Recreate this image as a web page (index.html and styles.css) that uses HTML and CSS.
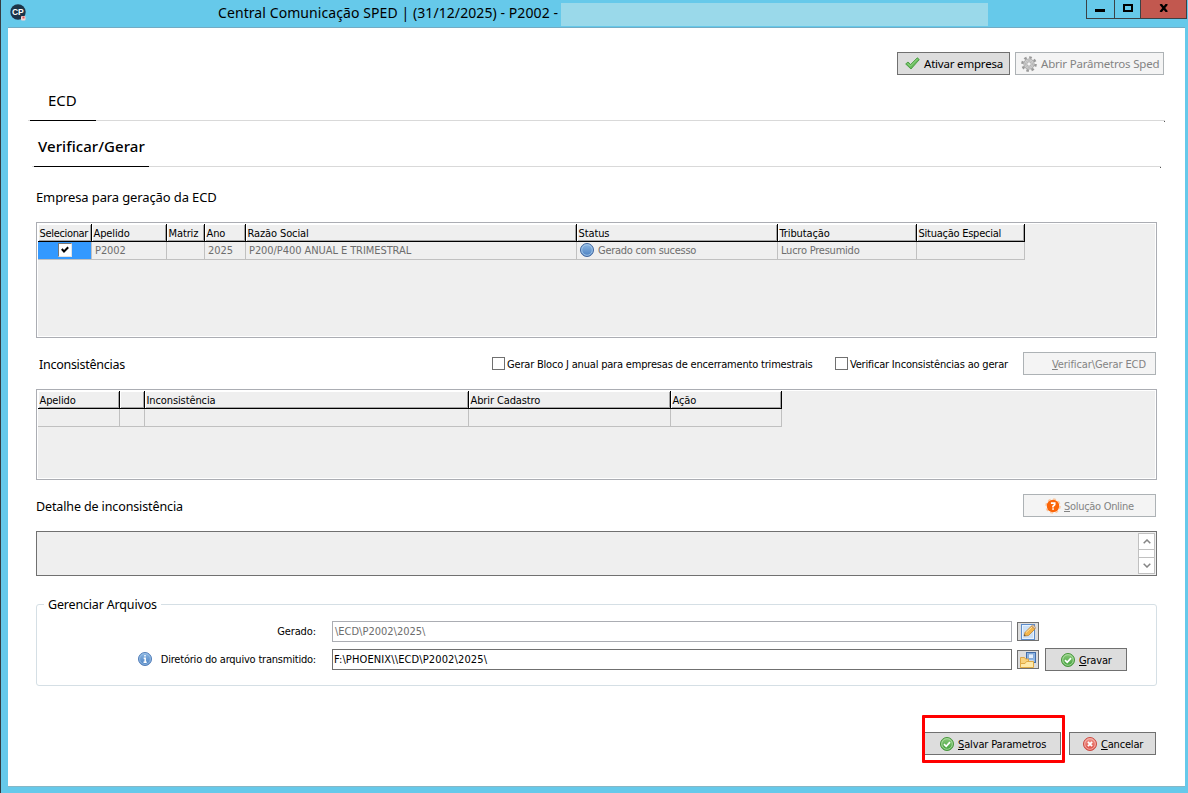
FILE: index.html
```html
<!DOCTYPE html>
<html lang="pt-BR">
<head>
<meta charset="utf-8">
<title>Central Comunicação SPED</title>
<link rel="stylesheet" href="styles.css">
</head>
<body>
<svg class="defs" width="0" height="0" aria-hidden="true">
  <defs>
    <linearGradient id="blue" x1="0" y1="0" x2="0" y2="1"><stop offset="0" stop-color="#8db8e4"/><stop offset="1" stop-color="#4a7fc0"/></linearGradient>
    <linearGradient id="green" x1="0" y1="0" x2="0" y2="1"><stop offset="0" stop-color="#8ccb7c"/><stop offset="1" stop-color="#3f9f3a"/></linearGradient>
    <linearGradient id="red" x1="0" y1="0" x2="0" y2="1"><stop offset="0" stop-color="#f09a90"/><stop offset="1" stop-color="#dc4a42"/></linearGradient>
    <symbol id="ok" viewBox="0 0 14 14">
      <circle cx="7" cy="7" r="6.5" fill="url(#green)" stroke="#47963c"/>
      <circle cx="7" cy="7" r="5.3" fill="none" stroke="#b9e2ad" stroke-width=".8"/>
      <path d="M4 7.2 6.2 9.3 10 5.2" fill="none" stroke="#fff" stroke-width="1.7"/>
    </symbol>
  </defs>
</svg>
<div class="window">
  <header class="titlebar">
    <svg class="app-icon" width="17" height="17" viewBox="0 0 17 17">
      <circle cx="8" cy="8" r="7.7" fill="#1d3448"/>
      <text x="7.800" y="11" text-anchor="middle" class="app-mark">CP</text>
      <rect x="11" y="12" width="4.500" height="4.500" rx="1" fill="#f3d5d6"/><rect x="12.500" y="12.500" width="2" height="2" fill="#e05555"/>
    </svg>
    <span class="title">Central Comunicação SPED | (31/12/2025) - P2002 -</span>
    <span class="mask"></span>
    <div class="controls">
      <span class="ctl min"><svg width="10" height="3"><rect width="10" height="3"/></svg></span>
      <span class="ctl max"><svg width="10" height="8"><rect x="1" y="1" width="8" height="6" fill="none" stroke="#000" stroke-width="2"/></svg></span>
      <span class="ctl close"><svg width="10" height="8"><path d="M1.500 0 8 8M8 0 1.500 8" stroke="#000" stroke-width="2.300"/></svg></span>
    </div>
  </header>
  <main class="client">
    <div class="toolbar">
      <button class="btn activate"><svg width="15" height="13" viewBox="0 0 15 13"><path d="M.7 7 3 5l2.600 2.500L12.300.8 14.300 2.600 6 12Z" fill="#68bb5c" stroke="#469a40" stroke-width=".9"/><path d="M2.500 6.500 5.500 9 12.500 2" fill="none" stroke="#9ada8d" stroke-width=".9"/></svg><span>Ativar empresa</span></button>
      <button class="btn off params"><svg width="16" height="16" viewBox="0 0 16 16"><circle cx="8" cy="8" r="6.600" fill="none" stroke="#999" stroke-width="2.400" stroke-dasharray="2.600 2.584"/><circle cx="8" cy="8" r="4.300" fill="#e2e2e2" stroke="#a6a6a6" stroke-width="2.600"/><circle cx="8" cy="8" r="4.200" fill="none" stroke="#cfcfcf" stroke-width="1.200"/><circle cx="8" cy="8" r="2.200" fill="#f4f4f4" stroke="#999" stroke-width=".8"/></svg><span>Abrir Parâmetros Sped</span></button>
    </div>
    <nav class="tabs outer"><span class="tab">ECD</span></nav>
    <nav class="tabs inner"><span class="tab">Verificar/Gerar</span></nav>

    <section class="body">
      <h2 class="heading first">Empresa para geração da ECD</h2>
      <div class="grid companies">
        <div class="row head"><span class="narrow">Selecionar</span><span>Apelido</span><span>Matriz</span><span>Ano</span><span>Razão Social</span><span>Status</span><span>Tributação</span><span class="special">Situação Especial</span></div>
        <div class="row data">
          <span class="picked"><i class="tick"><svg width="8" height="8" viewBox="0 0 8 8"><path d="M.8 3 3 5.500 7.200 1.200" fill="none" stroke="#000" stroke-width="2"/></svg></i></span>
          <span>P2002</span><span></span><span>2025</span><span>P200/P400 ANUAL E TRIMESTRAL</span>
          <span class="state"><svg width="14" height="14" viewBox="0 0 14 14"><circle cx="7" cy="7" r="6.500" fill="url(#blue)" stroke="#41669e"/><circle cx="7" cy="7" r="5.300" fill="none" stroke="#a5c7e8" stroke-width=".9"/></svg><b>Gerado com sucesso</b></span>
          <span class="tax">Lucro Presumido</span><span></span>
        </div>
      </div>

      <div class="line checks">
        <h2 class="heading">Inconsistências</h2>
        <label class="check block-j"><i class="box"></i><span class="text">Gerar Bloco J anual para empresas de encerramento trimestrais</span></label>
        <label class="check verify"><i class="box"></i><span class="text">Verificar Inconsistências ao gerar</span></label>
        <button class="btn off wide run"><span class="text"><u>V</u>erificar\Gerar ECD</span></button>
      </div>
      <div class="grid issues">
        <div class="row head"><span>Apelido</span><span></span><span>Inconsistência</span><span>Abrir Cadastro</span><span>Ação</span></div>
        <div class="row data"><span></span><span></span><span></span><span></span><span></span></div>
      </div>

      <div class="line detail">
        <h2 class="heading">Detalhe de inconsistência</h2>
        <button class="btn off wide help"><svg width="16" height="16" viewBox="0 0 16 16"><circle cx="8" cy="8" r="7" fill="none" stroke="#fcc79e" stroke-width="1.500" stroke-dasharray="2.800 2.700"/><circle cx="8" cy="8" r="6.200" fill="#fb6508"/><path d="M5.900 5.200h3.800v1.400L8 8.300v1.200" fill="none" stroke="#fff" stroke-width="1.700"/><rect x="7.200" y="10.300" width="1.700" height="1.500" fill="#fff"/></svg><span class="text"><u>S</u>olução Online</span></button>
      </div>
      <div class="memo">
        <div class="scroll"><i><svg width="8" height="5"><path d="M.7 4.300 4 1 7.300 4.300" fill="none" stroke="#858585" stroke-width="1.500"/></svg></i><i><svg width="8" height="5"><path d="M.7.700 4 4 7.300.700" fill="none" stroke="#858585" stroke-width="1.500"/></svg></i></div>
      </div>

      <div class="group">
        <span class="legend">Gerenciar Arquivos</span>
        <div class="field">
          <label class="label"><span>Gerado:</span></label>
          <div class="input dim">\ECD\P2002\2025\</div>
          <button class="mini"><svg width="16" height="16" viewBox="0 0 16 16"><rect x="1.500" y=".5" width="13" height="15" fill="#e8f2fc" stroke="#5b8ccb"/><rect x="3" y="2" width="10" height="12" fill="#cbdff5"/><path d="M4 12 5 8.500 11.500 2 15 5 8.500 11.500Z" fill="#f3b54a" stroke="#b98335" stroke-width=".8"/><path d="M6 8.500 12 3" stroke="#ffe3a3"/><path d="M11.500 2 13 .7 15.700 3.500 15 5Z" fill="#e9c8a4" stroke="#a7835c" stroke-width=".6"/><path d="M4 12l.5-1.700L5.700 11.500Z" fill="#444"/></svg></button>
        </div>
        <div class="field second">
          <label class="label"><svg class="info" width="14" height="14" viewBox="0 0 14 14"><circle cx="7" cy="7" r="6.500" fill="url(#blue)" stroke="#527db8"/><circle cx="7" cy="7" r="5.400" fill="none" stroke="#a5c7e8" stroke-width=".7"/><path d="M7 3v1.600M5.700 6.200H7.200V10M5.500 10.300h3.200" stroke="#fff" stroke-width="1.500" fill="none"/></svg><span class="text">Diretório do arquivo transmitido:</span></label>
          <div class="input path">F:\PHOENIX\\ECD\P2002\2025\</div>
          <button class="mini"><svg width="16" height="16" viewBox="0 0 16 16"><rect x="6.500" y=".5" width="9" height="10" fill="#8db6e6" stroke="#426da9"/><rect x="8.500" y="2" width="5" height="4.500" fill="#e4effb" stroke="#6a92c6" stroke-width=".6"/><rect x="8.500" y="8" width="5" height="2" fill="#d3d9e1"/><path d="M.5 15.500v-10h4l1 1.500h3v2.500" fill="#f9d27c" stroke="#dda545"/><path d="M.5 15.500v-4h4.500l1.500-2h7v6Z" fill="#ffe9a8" stroke="#dfaa45"/></svg></button>
          <button class="btn save-file"><svg width="14" height="14"><use href="#ok"/></svg><span class="text"><u>G</u>ravar</span></button>
        </div>
      </div>
    </section>
    <footer class="actions">
      <div class="highlight"><button class="btn save"><svg width="14" height="14"><use href="#ok"/></svg><span class="text"><u>S</u>alvar Parametros</span></button></div>
      <button class="btn cancel"><svg width="14" height="14" viewBox="0 0 14 14"><circle cx="7" cy="7" r="6.500" fill="url(#red)" stroke="#cb4a42"/><circle cx="7" cy="7" r="5.300" fill="none" stroke="#f8c1bb" stroke-width=".8"/><path d="m4.900 4.900 4.200 4.200M9.100 4.900 4.900 9.100" stroke="#fff" stroke-width="1.800"/></svg><span class="text"><u>C</u>ancelar</span></button>
    </footer>
  </main>
</div>
</body>
</html>
```
FILE: styles.css
```css
* { box-sizing: border-box; }
body { margin: 0; font: 11px/14px "DejaVu Sans Condensed", "DejaVu Sans", sans-serif; color: #000; }
b { font-weight: normal; }
i { font-style: normal; }
svg { display: block; flex: none; }
u { text-decoration: underline; text-underline-offset: 1px; text-decoration-thickness: 1px; }
.defs { position: absolute; }
.window { width: 1188px; height: 793px; overflow: hidden; background: #66c9ea; border-left: 1px solid #343b40; padding: 0 3px 6px 7px; }
.titlebar { height: 28px; display: flex; align-items: flex-start; border-bottom: 1px solid #72abc4; }
.app-icon { margin: 4px 0 0 2px; }
.app-mark { font: bold 8.5px "Liberation Sans", sans-serif; fill: #fff; }
.title { margin-left: 191px; width: 343px; font: 14px/26px "Noto Sans", sans-serif; letter-spacing: .08px; white-space: nowrap; }
.mask { width: 427px; height: 23px; margin-top: 3px; background: #9ad9ea; }
.controls { display: flex; margin-left: 98px; margin-right: -2px; width: 101px; height: 19px; border: 1px solid #3b4145; border-top: 0; }
.ctl { display: flex; justify-content: center; border-right: 1px solid #3b4145; }
.min { width: 28px; padding: 9px 1px 0 0; }
.max { width: 26px; padding-top: 4px; }
.close { width: 45px; padding-top: 4px; background: #c2584f; border: 0; }
.client { height: 759px; background: #fff; padding-top: 24px; border-bottom: 1px solid #86b7c6; }
.toolbar { display: flex; justify-content: flex-end; gap: 5px; padding-right: 21px; }
.btn { display: flex; align-items: center; height: 23px; padding: 0; border: 1px solid #707070; background: #ddd; font: inherit; color: #000; white-space: nowrap; }
.off { background: #f4f4f4; border-color: #adb2b5; color: #838383; }
.text { letter-spacing: -.19px; padding-top: 2px; }
.activate, .params { gap: 4px; font: 11.5px/16px "Noto Sans", sans-serif; letter-spacing: -.2px; }
.activate { width: 113px; padding-left: 7px; }
.params { width: 149px; padding-left: 5px; }
.tabs { position: relative; display: flex; height: 46px; border-bottom: 1px solid #d9d9d9; }
.tabs::after { content: ""; position: absolute; right: 0; bottom: -2px; width: 1px; height: 1px; background: #555; }
.outer { margin: 0 20px; padding-left: 2px; }
.inner { margin: 0 24px; padding-left: 2px; }
.tab { display: flex; align-items: center; height: 46px; border-bottom: 1px solid #000; white-space: nowrap; font: 15px/20px "Noto Sans", sans-serif; padding-top: 4px; }
.outer .tab { width: 66px; padding-left: 18px; }
.inner .tab { width: 115px; padding-left: 4px; font-weight: 500; letter-spacing: .07px; }
.body { margin: 0 28px; }
.heading { margin: 0; font: 12.5px/18px "Noto Sans", sans-serif; letter-spacing: -.12px; white-space: nowrap; }
.line .heading { padding-top: 2px; }
.first { padding: 21px 0 16px; font-size: 13px; }
.grid { border: 1px solid #abadb3; background: #efefef; box-shadow: inset 0 0 0 1px #fff; padding: 1px; }
.companies { height: 116px; }
.issues { height: 91px; }
.row { display: grid; white-space: nowrap; width: max-content; letter-spacing: -.11px; }
.companies .row { grid-template-columns: 54px 75px 38px 41px 331px 201px 139px 108px; }
.issues .row { grid-template-columns: 82px 25px 324px 202px 111px; }
.head { height: 18px; }
.head span { overflow: hidden; border-right: 1px solid #000; border-bottom: 1px solid #000; box-shadow: inset 1px 1px #fff, inset -1px -1px #a5a5a5; padding: 3px 0 0 1.5px; }
.head .narrow { letter-spacing: -.33px; }
.head .special { letter-spacing: -.25px; }
.data { height: 18px; color: #6d6d6d; letter-spacing: -.07px; }
.data > span { overflow: hidden; border-right: 1px solid #c0c0c0; border-bottom: 1px solid #c0c0c0; padding: 2px 0 0 3px; }
.data > .picked { background: #3399ff; padding: 1px 0 0 20px; }
.tick { display: block; width: 14px; height: 14px; padding: 2px; background: #fff; border: 1px solid #777; border-right-color: #e4e4e4; border-bottom-color: #e4e4e4; }
.data > .state { display: flex; gap: 4px; padding: 1px 0 0 3px; letter-spacing: -.27px; }
.state b { padding-top: 1px; }
.data > .tax { letter-spacing: -.23px; }
.line { display: flex; align-items: center; }
.checks { height: 23px; margin: 14px 1px 14px 3px; }
.checks .heading { width: 453px; letter-spacing: -.27px; }
.check { display: flex; align-items: center; gap: 2px; white-space: nowrap; }
.box { width: 13px; height: 13px; border: 1px solid #707070; background: #fff; flex: none; }
.block-j { width: 343px; }
.verify { width: 188px; }
.wide { width: 133px; }
.run { padding-left: 28px; }
.run .text { letter-spacing: -.1px; }
.detail { height: 23px; margin: 14px 1px 14px 0; justify-content: space-between; }
.help { padding-left: 21px; gap: 3px; }
.help .text { letter-spacing: -.3px; }
.memo { height: 45px; border: 1px solid #707070; background: #efefef; display: flex; justify-content: flex-end; padding: 1px; }
.scroll { width: 17px; height: 41px; display: flex; flex-direction: column; justify-content: space-between; background: #fff; border: 1px solid #c0c0c0; }
.scroll i { height: 16px; display: flex; align-items: center; justify-content: center; }
.scroll i:first-child { border-bottom: 1px solid #c0c0c0; }
.scroll i:last-child { border-top: 1px solid #c0c0c0; }
.group { position: relative; height: 82px; margin-top: 28px; border: 1px solid #d5dfe5; border-radius: 3px; padding-top: 16px; }
.legend { position: absolute; left: 7px; top: -9px; width: 117px; padding-left: 4px; background: #fff; font: 12.5px/18px "Noto Sans", sans-serif; letter-spacing: -.17px; white-space: nowrap; }
.field { display: flex; align-items: center; height: 21px; }
.second { margin-top: 7px; }
.label { width: 279px; margin-right: 16px; display: flex; justify-content: flex-end; align-items: center; gap: 9px; white-space: nowrap; letter-spacing: -.1px; }
.label .text { letter-spacing: -.21px; padding: 0; }
.info { margin-bottom: 1px; }
.input { width: 680px; height: 21px; border: 1px solid #707070; padding: 3px 0 0 2px; white-space: nowrap; }
.path { letter-spacing: .12px; padding-left: 1px; }
.dim { border-color: #abadb3; color: #6d6d6d; }
.mini { width: 22px; height: 19px; margin-left: 5px; padding: 0 0 0 2px; border: 1px solid #707070; background: #ddd; }
.save-file { width: 82px; padding-left: 15px; gap: 4px; margin-left: 6px; }
.actions { display: flex; margin: 29px 29px 0 0; justify-content: flex-end; gap: 4px; }
.highlight { width: 143px; height: 48px; border: 3px solid #f00; border-radius: 1px; padding-top: 14px; }
.save { width: 136px; border-left: 0; padding-left: 15px; gap: 4px; }
.save .text { letter-spacing: -.14px; }
.cancel { width: 87px; margin-top: 17px; padding-left: 13px; gap: 4px; }
```
